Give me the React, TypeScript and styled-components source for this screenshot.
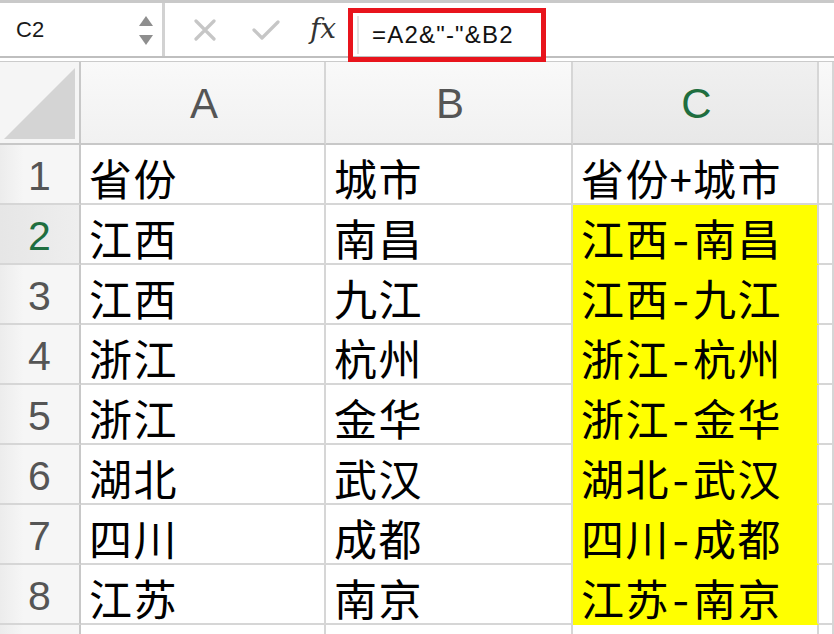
import React from 'react';
import styled, { createGlobalStyle } from 'styled-components';

const rows: string[][] = [
  ['省份', '城市', '省份+城市'],
  ['江西', '南昌', '江西-南昌'],
  ['江西', '九江', '江西-九江'],
  ['浙江', '杭州', '浙江-杭州'],
  ['浙江', '金华', '浙江-金华'],
  ['湖北', '武汉', '湖北-武汉'],
  ['四川', '成都', '四川-成都'],
  ['江苏', '南京', '江苏-南京'],
];

const columns = ['A', 'B', 'C'];
const activeCol = 'C';
const activeRow = 2;

const App: React.FC = () => {
  return (
    <>
      <GlobalStyle />
      <Sheet>
        <FormulaBar>
          <NameBox>
            <NameText>C2</NameText>
            <Stepper>
              <svg width="14" height="10" viewBox="0 0 14 10">
                <polygon points="7,0 14,10 0,10" fill="#8e8e8e" />
              </svg>
              <svg width="14" height="10" viewBox="0 0 14 10">
                <polygon points="0,0 14,0 7,10" fill="#8e8e8e" />
              </svg>
            </Stepper>
          </NameBox>
          <Actions>
            <svg width="22" height="22" viewBox="0 0 22 22">
              <path d="M2 2 L20 20 M20 2 L2 20" stroke="#c6c6c6" strokeWidth="3.2" strokeLinecap="round" />
            </svg>
            <svg width="28" height="22" viewBox="0 0 28 22">
              <path d="M2 11 L10 19 L26 3" stroke="#c6c6c6" strokeWidth="3.2" fill="none" strokeLinecap="round" strokeLinejoin="round" />
            </svg>
            <Fx>fx</Fx>
          </Actions>
          <FormulaInput>
            <FormulaText>=A2&amp;"-"&amp;B2</FormulaText>
          </FormulaInput>
        </FormulaBar>
        <Divider />
        <Grid>
          <Corner>
            <svg width="72" height="72" viewBox="0 0 72 72">
              <polygon points="71,0 71,71 0,71" fill="#d4d4d4" />
            </svg>
          </Corner>
          {columns.map((c) => (
            <ColHeader key={c} $active={c === activeCol}>{c}</ColHeader>
          ))}
          <ColHeader $active={false} />
          {rows.map((r, i) => (
            <React.Fragment key={i}>
              <RowHeader $active={i + 1 === activeRow}>{i + 1}</RowHeader>
              {r.map((v, j) => (
                <Cell key={j} $hl={j === 2 && i > 0}>{v}</Cell>
              ))}
              <Cell $hl={false} />
            </React.Fragment>
          ))}
          <RowHeader $active={false} />
          <Cell $hl={false} />
          <Cell $hl={false} />
          <Cell $hl={false} />
          <Cell $hl={false} />
        </Grid>
      </Sheet>
    </>
  );
};

export default App;

const GlobalStyle = createGlobalStyle`
  body {
    margin: 0;
    background: #ffffff;
    font-family: 'Liberation Sans', 'Noto Sans CJK SC', sans-serif;
  }
`;

const Sheet = styled.div`
  width: 834px;
  height: 634px;
  overflow: hidden;
  background: #ffffff;
`;

const FormulaBar = styled.div`
  display: flex;
  height: 58px;
  box-sizing: border-box;
  border-top: 3px solid #c9c9c9;
  border-bottom: 2px solid #bfbfbf;
`;

const NameBox = styled.div`
  width: 165px;
  flex-shrink: 0;
  display: flex;
  align-items: center;
  justify-content: space-between;
  box-sizing: border-box;
  padding: 0 9px 0 16px;
  border-right: 3px solid #d2d2d2;
`;

const NameText = styled.span`
  font-family: 'Liberation Sans', sans-serif;
  font-size: 22px;
  color: #1a1a1a;
`;

const Stepper = styled.div`
  display: flex;
  flex-direction: column;
  gap: 9px;
  margin-top: 2px;
`;

const Actions = styled.div`
  width: 183px;
  flex-shrink: 0;
  display: flex;
  align-items: center;
  padding-left: 29px;
  box-sizing: border-box;

  svg:nth-child(2) {
    margin-left: 36px;
  }
`;

const Fx = styled.span`
  margin-left: 30px;
  font-family: 'DejaVu Serif', serif;
  font-style: italic;
  font-size: 28px;
  color: #333333;
  margin-top: -2px;
`;

const FormulaInput = styled.div`
  position: relative;
  z-index: 2;
  width: 198px;
  height: 54px;
  flex-shrink: 0;
  margin-top: 5px;
  margin-bottom: -10px;
  box-sizing: border-box;
  border: 5px solid #e8141c;
  display: flex;
  align-items: center;
`;

const FormulaText = styled.div`
  height: 38px;
  display: flex;
  align-items: center;
  margin-left: 4px;
  padding-left: 13px;
  border-left: 2px solid #e2e2e2;
  font-family: 'Liberation Sans', sans-serif;
  font-size: 24px;
  letter-spacing: 1.2px;
  color: #111111;
  white-space: nowrap;
`;

const Divider = styled.div`
  height: 3px;
  border-bottom: 1px solid #cbcbcb;
`;

const Grid = styled.div`
  display: grid;
  grid-template-columns: 81px 245px 247px 246px 1fr;
  grid-template-rows: 83px repeat(9, 60px);
`;

const Corner = styled.div`
  box-sizing: border-box;
  background: #f5f5f5;
  border-right: 2px solid #c8c8c8;
  border-bottom: 2px solid #c8c8c8;
  display: flex;
  align-items: flex-end;
  justify-content: flex-end;
  padding: 0 3px 3px 0;
`;

const ColHeader = styled.div<{ $active: boolean }>`
  box-sizing: border-box;
  background: ${(p) => (p.$active ? 'linear-gradient(#f0f0f0, #e8e8e8)' : 'linear-gradient(#f9f9f9, #f1f1f1)')};
  border-right: 2px solid #d6d6d6;
  border-bottom: 2px solid #c8c8c8;
  display: flex;
  align-items: center;
  justify-content: center;
  padding: 2px 0 0 3px;
  font-family: 'Liberation Sans', sans-serif;
  font-size: 42px;
  color: ${(p) => (p.$active ? '#1f6e3f' : '#555555')};
`;

const RowHeader = styled.div<{ $active: boolean }>`
  box-sizing: border-box;
  background: ${(p) => (p.$active ? 'linear-gradient(90deg, #e6e6e6, #eeeeee)' : 'linear-gradient(90deg, #ececec, #f6f6f6 30%, #f6f6f6)')};
  border-right: 2px solid #c8c8c8;
  border-bottom: 2px solid #d6d6d6;
  display: flex;
  align-items: center;
  justify-content: center;
  padding-top: 4px;
  font-family: 'Liberation Sans', sans-serif;
  font-size: 41px;
  color: ${(p) => (p.$active ? '#1f6e3f' : '#555555')};
`;

const Cell = styled.div<{ $hl: boolean }>`
  box-sizing: border-box;
  background: ${(p) => (p.$hl ? '#ffff00' : '#ffffff')};
  border-right: 2px solid #d6d6d6;
  border-bottom: 2px solid ${(p) => (p.$hl ? '#ffff00' : '#d6d6d6')};
  display: flex;
  align-items: center;
  padding: 8px 0 0 8px;
  font-family: 'Noto Sans CJK SC', sans-serif;
  font-feature-settings: 'hwid';
  font-size: 43px;
  line-height: 1.2;
  letter-spacing: 1.5px;
  color: #000000;
  white-space: nowrap;
`;
